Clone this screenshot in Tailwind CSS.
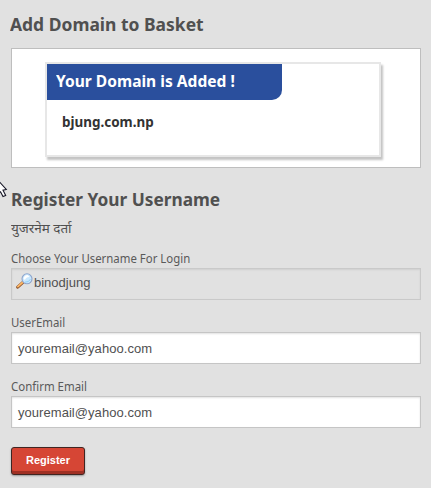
<!DOCTYPE html>
<html lang="en"><head><meta charset="utf-8"><title>Register Your Username</title>
<script src="https://cdn.jsdelivr.net/npm/@tailwindcss/browser@4"></script></head>
<body class="relative h-[488px] w-[431px] overflow-hidden bg-[#e1e1e1] pl-[11px] font-['Noto_Sans','Open_Sans',sans-serif] text-[#505050]">
<main class="flex w-[410px] flex-col">
<h1 class="-ml-px mt-[11px] h-[37px] origin-left scale-x-[.97] text-lg leading-[26px] font-bold whitespace-nowrap">Add Domain to Basket</h1>
<section class="h-[120px] border border-[#bebebe] bg-white pt-[13px] pl-[33px]">
<div class="h-[95px] w-[336px] border-2 border-[#e7e7e7] bg-white shadow-[2px_3px_2px_#c4c4c4]">
<div class="h-9 w-[235px] rounded-br-[10px] bg-[#2a4f9d] pl-[9px] text-base leading-[35px] font-bold whitespace-nowrap text-white"><span class="inline-block origin-left scale-x-[.973]">Your Domain is Added !</span></div>
<p class="pt-3 pl-[15px] text-sm leading-5 font-bold text-[#333] whitespace-nowrap"><span class="inline-block origin-left scale-x-[.96]">bjung.com.np</span></p>
</div></section>
<h2 class="mt-[18px] h-[26px] origin-left scale-x-[.96] text-lg leading-[26px] font-bold whitespace-nowrap">Register Your Username</h2>
<p class="mt-[6px] h-5 origin-left scale-x-[1.035] text-[13px] leading-5 whitespace-nowrap">युजरनेम दर्ता</p>
<form class="flex flex-col">
<label class="mt-[11px] h-[19px] origin-left scale-x-[.95] text-xs leading-5 whitespace-nowrap text-[#5a5a5a]">Choose Your Username For Login</label>
<div class="flex h-8 items-start border border-[#c9c9c9] pt-[3px] pl-1 shadow-[inset_0_1px_2px_#cfcfcf]">
<svg class="mt-px h-4 w-[18px] shrink-0" viewBox="0 0 18 16"><path d="M1.7 14.2 7.2 9.2" stroke="#8c542e" stroke-width="3" stroke-linecap="round"/><path d="M1.9 13.7 7 9" stroke="#ffb866" stroke-width="1.7" stroke-linecap="round"/><circle cx="11" cy="5.8" r="5" fill="#c9e8ff" stroke="#8fa5cb" stroke-width="1.1"/><path d="M7.5 5.5Q8.2 2.2 11.6 2.1L13.6 4Q10.2 3.9 8.8 7Z" fill="#fff"/><path d="M9 9.2q4 .2 5.4-3" fill="none" stroke="#8dcef5"/></svg>
<span class="pt-px font-['Liberation_Sans',sans-serif] text-[13px] leading-5 whitespace-nowrap">binodjung</span></div>
<label class="mt-[13px] h-[19px] origin-left scale-x-[.95] text-xs leading-5 whitespace-nowrap text-[#5a5a5a]">UserEmail</label>
<div class="h-8 border border-[#c5c5c5] bg-white pl-1.5 font-['Liberation_Sans',sans-serif] text-[13px] leading-[31px] tracking-[0.05px] shadow-[inset_0_1px_2px_#e1e1e1]">youremail@yahoo.com</div>
<label class="mt-[13px] h-[19px] origin-left scale-x-[.955] text-xs leading-5 whitespace-nowrap text-[#5a5a5a]">Confirm Email</label>
<div class="h-8 border border-[#c5c5c5] bg-white pl-1.5 font-['Liberation_Sans',sans-serif] text-[13px] leading-[31px] tracking-[0.05px] shadow-[inset_0_1px_2px_#e1e1e1]">youremail@yahoo.com</div>
<button type="button" class="mt-[19px] h-7 w-[74px] rounded-[3px] border border-[#402522] bg-[#d64635] pb-0.5 font-['Liberation_Sans',sans-serif] text-[11px] leading-[22px] font-bold text-white shadow-[inset_0_-3px_#9f3024,0_1px_2px_#999]">Register</button>
</form></main>
<svg class="absolute top-[180px] left-0 h-[20px] w-[10px]" viewBox="0 0 10 20"><path d="M-4-2 6.3 9.5 3 10.2 5.7 15.5 3 16.6.5 11.8-4 14Z" fill="#fff" stroke="#171727" stroke-width="1.1"/></svg>
</body></html>
